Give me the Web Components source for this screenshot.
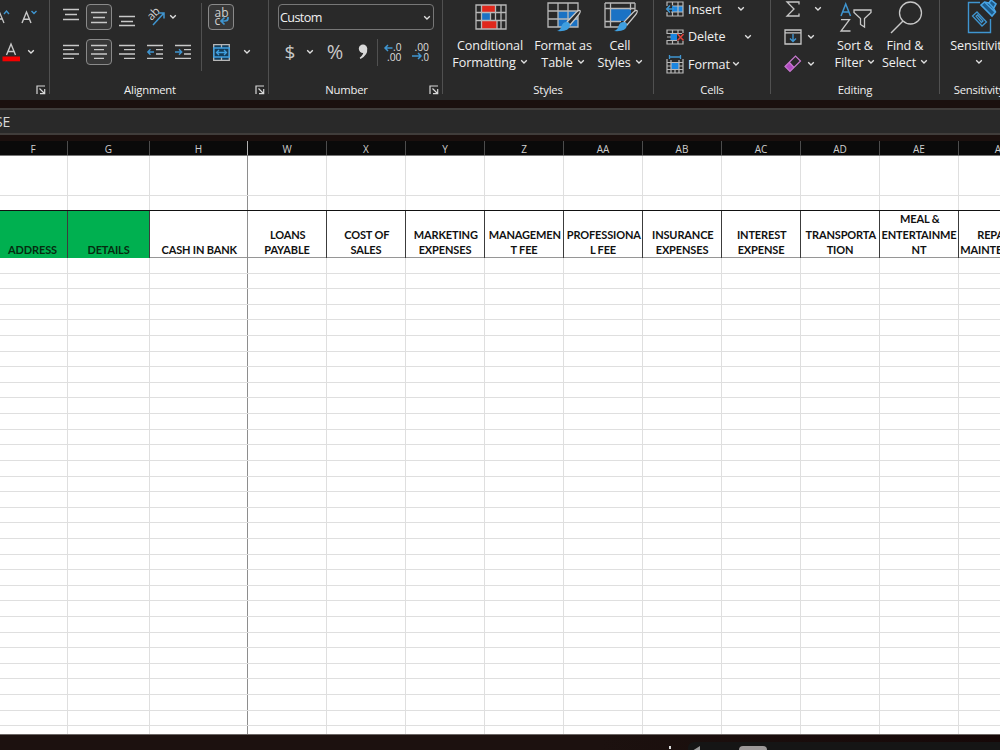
<!DOCTYPE html>
<html lang="en">
<head>
<meta charset="utf-8">
<title>Workbook</title>
<style>
	body {
		margin: 0;
		width: 1000px;
		height: 750px;
		overflow: hidden;
		background: #1b100e;
		color: #f0f0f0;
		font-family: "Open Sans", "Noto Sans", sans-serif;
	}
</style>
</head>
<body>
<excel-window></excel-window>

<script>
// Each icon is [width, height, markup]
const ICONS = {
	chevron: [8, 6, '<path d="M1.200 1.200 4 4 6.800 1.200" fill="none" stroke="#e0e0e0" stroke-width="1.300"/>'],
	launcher: [10, 10, '<path d="M1 9V1H9M3.5 3.5 8 8M8.7 4V8.7H4" fill="none" stroke="#d8d8d8" stroke-width="1.2"/>'],
	growFont: [16, 16, '<path d="M-2 14 3 2 8 14M0 10H6" fill="none" stroke="#c8c8c8" stroke-width="1.3"/><path d="M8 5 10.5 2 13 5" fill="none" stroke="#3f95d0" stroke-width="1.4"/>'],
	shrinkFont: [16, 16, '<path d="M1 14 5.5 3 10 14M2.7 10.3H8.3" fill="none" stroke="#c8c8c8" stroke-width="1.4"/><path d="M10.5 2 13 4.5 15.500 2" fill="none" stroke="#3f95d0" stroke-width="1.4"/>'],
	fontColor: [18, 18, '<path d="M4.500 12 9 1 13.500 12M6 8.500H12" fill="none" stroke="#c8c8c8" stroke-width="1.4"/><path d="M0.500 13.500H18V18.300H0.500Z" fill="#f40000"/>'],
	alignTop: [16, 18, '<path d="M0 1.500H16M2 6.500H14M0 11.500H16" stroke="#c8c8c8" stroke-width="1.300"/>'],
	alignMiddle: [16, 18, '<path d="M0 4.500H16M2 9.500H14M0 14.500H16" stroke="#c8c8c8" stroke-width="1.300"/>'],
	alignBottom: [16, 18, '<path d="M0 8.500H16M2 13.500H14M0 17.500H16" stroke="#c8c8c8" stroke-width="1.300"/>'],
	alignLeft: [16, 16, '<path d="M0 1.500H16M0 5.700H11M0 10H16M0 14.400H11" stroke="#c8c8c8" stroke-width="1.300"/>'],
	alignCenter: [16, 16, '<path d="M0 1.500H16M3 5.700H13M0 10H16M3 14.400H13" stroke="#c8c8c8" stroke-width="1.300"/>'],
	alignRight: [16, 16, '<path d="M0 1.500H16M5 5.700H16M0 10H16M5 14.400H16" stroke="#c8c8c8" stroke-width="1.300"/>'],
	outdent: [16, 16, '<path d="M0 1.500H16M9 5.700H16M9 10H16M0 14.400H16" stroke="#c8c8c8" stroke-width="1.300"/><path d="M7 8H1M3.500 5.300 0.800 8 3.500 10.700" fill="none" stroke="#3f95d0" stroke-width="1.400"/>'],
	indent: [16, 16, '<path d="M0 1.500H16M9 5.700H16M9 10H16M0 14.400H16" stroke="#c8c8c8" stroke-width="1.300"/><path d="M0 8H6.500M4 5.300 6.700 8 4 10.700" fill="none" stroke="#3f95d0" stroke-width="1.400"/>'],
	orient: [18, 18, '<text x="5.500" y="13" transform="rotate(-45 5.500 13)" font-size="11.500" letter-spacing="-0.500" fill="#d0d0d0">ab</text><path d="M7 17 17.500 5.500M12.500 5H18V10.500" fill="none" stroke="#3f95d0" stroke-width="1.500"/>'],
	wrap: [18, 18, '<text x="2.500" y="8.500" font-size="12" fill="#d0d0d0">ab</text><text x="2.500" y="16.500" font-size="12" fill="#d0d0d0">c</text><path d="M16 9V10Q16 13 13 13H9.500M12.500 9.500 9 13 12.500 16.500" fill="none" stroke="#3f95d0" stroke-width="1.700"/>'],
	merge: [17, 17, '<path d="M1 1H16V16H1Z" fill="#153c58"/><path d="M0.700 0.700H16.300V16.300H0.700ZM8.500 1V4M8.500 13V16" fill="none" stroke="#b8b8b8" stroke-width="1.300"/><path d="M0.700 4H16.300V13H0.700ZM3.500 8.500H13.500M6 6 3.500 8.500 6 11M11 6 13.500 8.500 11 11" fill="none" stroke="#3f9fe0" stroke-width="1.300"/>'],
	comma: [10, 16, '<circle cx="5" cy="4.800" r="4.200" fill="#d8d8d8"/><path d="M5.500 4.500H9.200Q10 11 2.500 15L1.700 13.800Q6.500 10 5.500 4.500" fill="#d8d8d8"/>'],
	moreDecimals: [18, 18, '<text x="9" y="8" font-size="11" textLength="8.500" lengthAdjust="spacingAndGlyphs" fill="#dcdcdc">.0</text><text x="3" y="17.500" font-size="11" textLength="14.500" lengthAdjust="spacingAndGlyphs" fill="#dcdcdc">.00</text><path d="M8.500 5H1M4 2 1 5 4 8" fill="none" stroke="#3f95d0" stroke-width="1.500"/>'],
	lessDecimals: [18, 18, '<text x="2.500" y="8" font-size="11" textLength="14.500" lengthAdjust="spacingAndGlyphs" fill="#dcdcdc">.00</text><text x="9" y="17.500" font-size="11" textLength="8" lengthAdjust="spacingAndGlyphs" fill="#dcdcdc">.0</text><path d="M0 13H9M6 10 9 13 6 16" fill="none" stroke="#3f95d0" stroke-width="1.500"/>'],
	conditional: [32, 26, '<path d="M6 1H20V8H6ZM6 17H22V25H6Z" fill="#e0281c"/><path d="M6 9H15V16H6Z" fill="#1b72c4"/><path d="M1 1H31V25H1ZM6.500 1V25M20.500 1V16M22 17V25M26 1V25M15.500 8.500V16.500M1 8.500H31M1 16.500H31" fill="none" stroke="#b8b8b8" stroke-width="1.300"/>'],
	formatTable: [34, 30, '<path d="M11 9H31V25H11Z" fill="#1b72c4"/><path d="M1 1H31V25H1ZM11 1V25M21 1V25M1 9H31M1 17H31" fill="none" stroke="#b8b8b8" stroke-width="1.300"/><use href="#brush"/>'],
	cellStyles: [34, 30, '<path d="M6 7H27V19H6Z" fill="#1b72c4"/><path d="M1 1H31M1 1V25H16M31 1V9M6.500 1V25M26.500 1V8M1 6.500H31M1 19.500H17" fill="none" stroke="#b8b8b8" stroke-width="1.300"/><use href="#brush"/>'],
	insert: [18, 16, '<path d="M6 5H17V11H6Z" fill="#1b86e0"/><path d="M1 5V1H17V15H1V11M6.500 1V4.500M12 1V15M6.500 11V15M7 5H17M5 11H17" fill="none" stroke="#b8b8b8" stroke-width="1.200"/><path d="M8 8H1M4 4.500 0.800 8 4 11.500" fill="none" stroke="#3f95d0" stroke-width="1.600"/>'],
	remove: [18, 16, '<path d="M4.500 5H11V11H4.500Z" fill="#1b86e0"/><path d="M1 5V1H17V4M1 4.500H16M1 11.500H11M1 11V15H17V12M6.500 1V5M12 1V4M6.500 11V15M12 12V15M1 8H5" fill="none" stroke="#b8b8b8" stroke-width="1.200"/><path d="M11.500 5 17.500 11.500M17.500 5 11.500 11.500" stroke="#e0443c" stroke-width="1.500"/>'],
	format: [18, 19, '<path d="M5 8H13V14H5Z" fill="#1b86e0"/><path d="M1 4V18H17V4M1 7.500H17M1 14.500H17M5 5V18M13 5V18M1 11H5M13 11H17M9 14V18" fill="none" stroke="#b8b8b8" stroke-width="1.200"/><path d="M3.500 2H14.500M3.500 0V4M14.500 0V4" stroke="#3f95d0" stroke-width="1.300"/>'],
	sum: [14, 16, '<path d="M13 3.500V1H1L8 8 1 15H13V12.500" fill="none" stroke="#c8c8c8" stroke-width="1.300"/>'],
	fill: [18, 16, '<path d="M1 1H17V15H1ZM1 3.800H17" fill="none" stroke="#c8c8c8" stroke-width="1.300"/><path d="M9 5V12.500M6 9.500 9 12.500 12 9.500" fill="none" stroke="#3f95d0" stroke-width="1.400"/>'],
	eraser: [18, 18, '<path d="M5.500 7.500 10 12.500 6 16.500 1 11.500Z" fill="#b04ac0"/><path d="M1 11.500 11.500 1 16.500 6 6 16.500ZM5.500 7.500 10 12.500" fill="none" stroke="#c878d0" stroke-width="1.200"/>'],
	sort: [32, 31, '<path d="M1 14 5.700 2 10.500 14M2.500 10H9" fill="none" stroke="#3f95d0" stroke-width="1.500"/><path d="M1 17.700H9.500L1 29H10.500" fill="none" stroke="#c8c8c8" stroke-width="1.300"/><path d="M14 8H31V10.500L24.500 16.500V25L20.500 22.500V16.500L14 10.500Z" fill="none" stroke="#c8c8c8" stroke-width="1.300"/>'],
	find: [32, 33, '<circle cx="20.500" cy="12" r="11" fill="none" stroke="#c8c8c8" stroke-width="1.300"/><path d="M13 20 1 32" stroke="#c8c8c8" stroke-width="1.400"/>'],
	sensitivity: [26, 33, '<path d="M13 1.500H1.500V31.500H23.500V18" fill="none" stroke="#3f95d0" stroke-width="1.400"/><path d="M5.500 15 10 11 19.500 21 15 25ZM9 15.200 10.500 14 16 20 14.500 21.500Z" fill="none" stroke="#3f95d0" stroke-width="1.300"/><path d="M14 4 17.500 1 22 2 24 -1 29 3 26.500 7.500 28.500 11 25 15Z" fill="#1d5c8c" stroke="#48a4e4" stroke-width="1.600"/><path d="M17.500 1 28 11M22 2 26.500 7" fill="none" stroke="#48a4e4" stroke-width="1.400"/>']
};

const BRUSH = `<g>
	<path d="M33 8.500Q34 10 31 13.500L23 23 20 20 29 10.500Q31.500 8 33 8.500Z" fill="#292929" stroke="#c8c8c8" stroke-width="1.200"/>
	<path d="M19.500 20Q23 20 23 23.500Q22 30 10 29Q14 27.500 14.500 24Q16 20 19.500 20Z" fill="#3f9fe0"/>
</g>`;

class UiIcon extends HTMLElement {
	constructor() {
		super();
		this.attachShadow({ mode: 'open' });
	}

	connectedCallback() {
		const [w, h, markup] = ICONS[this.getAttribute('name')];
		this.shadowRoot.innerHTML = `<style>
			:host { display: inline-block; flex: none; width: ${w}px; height: ${h}px; }
			svg { display: block; overflow: visible; }
		</style>
		<svg width="${w}" height="${h}" viewBox="0 0 ${w} ${h}" aria-hidden="true">${markup.replace('<use href="#brush"/>', BRUSH)}</svg>`;
	}
}
customElements.define('ui-icon', UiIcon);

// Small square button, optionally pressed
class ToolButton extends HTMLElement {
	constructor() {
		super();
		this.attachShadow({ mode: 'open' }).innerHTML = `<style>
			:host {
				align-items: center;
				border: 1px solid transparent;
				border-radius: 4px;
				box-sizing: border-box;
				color: #c8c8c8;
				display: flex;
				flex: none;
				font-size: 19px;
				height: 26px;
				justify-content: center;
				line-height: 26px;
				margin: 0 1px;
				width: 26px;
			}
			:host([pressed]) {
				background: #373737;
				border-color: #8a8a8a;
			}
		</style><slot></slot>`;
	}
}
customElements.define('tool-button', ToolButton);

// Large button: icon on top, two lines of text, the arrow ends the second
class BigButton extends HTMLElement {
	constructor() {
		super();
		this.attachShadow({ mode: 'open' });
	}

	connectedCallback() {
		this.shadowRoot.innerHTML = `<style>
			:host {
				align-items: center;
				display: flex;
				flex: none;
				flex-direction: column;
				font-size: 12.6px;
				letter-spacing: -0.12px;
				line-height: 17px;
				white-space: nowrap;
			}
			.icon { display: flex; height: 34px; align-items: center; justify-content: center; margin-bottom: 2.5px; padding-left: 2px; }
			.second { align-items: center; display: flex; gap: 4px; height: 17px; }
			.second ui-icon { margin-top: -1px; }
		</style>
		<div class="icon"><ui-icon name="${this.getAttribute('icon')}"></ui-icon></div>
		<div>${this.getAttribute('top')}</div>
		<div class="second"><slot></slot><ui-icon name="chevron"></ui-icon></div>`;
	}
}
customElements.define('big-button', BigButton);

// One group of the ribbon with its caption and an optional launcher
class RibbonGroup extends HTMLElement {
	constructor() {
		super();
		this.attachShadow({ mode: 'open' });
	}

	connectedCallback() {
		const launcher = this.hasAttribute('launcher') ? '<ui-icon name="launcher"></ui-icon>' : '';
		this.shadowRoot.innerHTML = `<style>
			:host {
				box-sizing: border-box;
				display: flex;
				flex: none;
				flex-direction: column;
				height: 94px;
				border-right: 1px solid #505050;
			}
			:host(:last-of-type) { border-right: 0; }
			.body { display: flex; flex: none; height: 80px; }
			.caption { align-items: center; display: flex; flex: none; font-size: 11.3px; height: 19px; line-height: 19px; }
			:host([launcher]) .caption { padding-right: 3px; }
			.caption span { flex: 1; text-align: center; letter-spacing: -0.2px; }
			:host([launcher]) .caption span { margin-right: 5px; }
		</style>
		<div class="body"><slot></slot></div>
		<div class="caption"><span>${this.getAttribute('caption') || ''}</span>${launcher}</div>`;
	}
}
customElements.define('ribbon-group', RibbonGroup);

class ExcelRibbon extends HTMLElement {
	constructor() {
		super();
		this.attachShadow({ mode: 'open' }).innerHTML = `<style>
			:host { background: #292929; display: flex; height: 100px; overflow: hidden; width: 1070px; }
			.col { display: flex; flex-direction: column; }
			.row { align-items: center; display: flex; flex: none; height: 26px; }
			.two { gap: 9px; padding-top: 4px; }
			.rule { background: #505050; flex: none; width: 1px; }
			.font { width: 50px; }
			.align { width: 219px; }
			.align .two:first-child { padding-left: 7px; width: 145px; }
			.number { width: 174px; }
			.number .two { padding-left: 9px; }
			.select {
				align-items: center;
				border: 1px solid #777;
				border-radius: 4px;
				box-sizing: border-box;
				display: flex;
				font-size: 12.6px;
				height: 26px;
				justify-content: space-between;
				letter-spacing: -0.6px;
				padding: 1px 2px 0 1px;
				width: 156px;
			}
			.styles { width: 211px; }
			.cells { width: 117px; }
			.cells .col, .small { gap: 1.5px; }
			.cells .col { margin-top: -4px; padding-left: 12px; }
			.cells .row { font-size: 12.6px; letter-spacing: -0.1px; }
			.cells .row ui-icon:first-child { margin-right: 4px; }
			.editing { width: 169px; }
			.small { margin-top: -4px; padding-left: 12px; width: 47px; }
			.small .box { display: flex; justify-content: center; width: 19px; margin-right: 5px; }
			.sensitivity { width: 78px; }
		</style>
		<ribbon-group class="font" launcher>
			<div class="col two">
				<div class="row"><ui-icon name="growFont" style="margin-left:-4px"></ui-icon><ui-icon name="shrinkFont" style="margin-left:9px"></ui-icon></div>
				<div class="row"><ui-icon name="fontColor" style="margin-left:2px"></ui-icon><ui-icon name="chevron" style="margin-left:7px"></ui-icon></div>
			</div>
		</ribbon-group>
		<ribbon-group class="align" caption="Alignment" launcher>
			<div class="col two">
				<div class="row">
					<tool-button><ui-icon name="alignTop"></ui-icon></tool-button>
					<tool-button pressed><ui-icon name="alignMiddle"></ui-icon></tool-button>
					<tool-button><ui-icon name="alignBottom"></ui-icon></tool-button>
					<tool-button><ui-icon name="orient"></ui-icon></tool-button>
					<ui-icon name="chevron"></ui-icon>
				</div>
				<div class="row">
					<tool-button><ui-icon name="alignLeft"></ui-icon></tool-button>
					<tool-button pressed><ui-icon name="alignCenter"></ui-icon></tool-button>
					<tool-button><ui-icon name="alignRight"></ui-icon></tool-button>
					<tool-button><ui-icon name="outdent"></ui-icon></tool-button>
					<tool-button><ui-icon name="indent"></ui-icon></tool-button>
				</div>
			</div>
			<div class="rule" style="height:68px;margin:3px 5px 0 -1px"></div>
			<div class="col two">
				<div class="row"><tool-button pressed><ui-icon name="wrap"></ui-icon></tool-button></div>
				<div class="row"><tool-button><ui-icon name="merge"></ui-icon></tool-button><ui-icon name="chevron" style="margin-left:8px"></ui-icon></div>
			</div>
		</ribbon-group>
		<ribbon-group class="number" caption="Number" launcher>
			<div class="col two">
				<div class="row"><div class="select"><span>Custom</span><ui-icon name="chevron"></ui-icon></div></div>
				<div class="row">
					<tool-button style="margin-left:-1px">$</tool-button>
					<ui-icon name="chevron" style="margin:0 7px 0 2px"></ui-icon>
					<tool-button style="font-size:20px">%</tool-button>
					<tool-button><ui-icon name="comma"></ui-icon></tool-button>
					<div class="rule" style="height:27px;margin-right:1px"></div>
					<tool-button><ui-icon name="moreDecimals"></ui-icon></tool-button>
					<tool-button><ui-icon name="lessDecimals"></ui-icon></tool-button>
				</div>
			</div>
		</ribbon-group>
		<ribbon-group class="styles" caption="Styles">
			<big-button icon="conditional" top="Conditional" style="width:82px;margin-left:6px">Formatting</big-button>
			<big-button icon="formatTable" top="Format as" style="width:64px">Table</big-button>
			<big-button icon="cellStyles" top="Cell" style="width:50px">Styles</big-button>
		</ribbon-group>
		<ribbon-group class="cells" caption="Cells">
			<div class="col">
				<div class="row"><ui-icon name="insert"></ui-icon><span style="width:49px">Insert</span><ui-icon name="chevron"></ui-icon></div>
				<div class="row"><ui-icon name="remove"></ui-icon><span style="width:56px">Delete</span><ui-icon name="chevron"></ui-icon></div>
				<div class="row"><ui-icon name="format"></ui-icon><span style="width:44px">Format</span><ui-icon name="chevron"></ui-icon></div>
			</div>
		</ribbon-group>
		<ribbon-group class="editing" caption="Editing">
			<div class="col small">
				<div class="row"><div class="box"><ui-icon name="sum"></ui-icon></div><ui-icon name="chevron" style="margin-left:7px"></ui-icon></div>
				<div class="row"><div class="box"><ui-icon name="fill"></ui-icon></div><ui-icon name="chevron"></ui-icon></div>
				<div class="row"><div class="box"><ui-icon name="eraser"></ui-icon></div><ui-icon name="chevron"></ui-icon></div>
			</div>
			<big-button icon="sort" top="Sort &amp;amp;" style="width:50px">Filter</big-button>
			<big-button icon="find" top="Find &amp;amp;" style="width:50px">Select</big-button>
		</ribbon-group>
		<ribbon-group class="sensitivity" caption="Sensitivity">
			<big-button icon="sensitivity" top="Sensitivity" style="width:78px"></big-button>
		</ribbon-group>`;
	}
}
customElements.define('excel-ribbon', ExcelRibbon);

class FormulaBar extends HTMLElement {
	constructor() {
		super();
		this.attachShadow({ mode: 'open' }).innerHTML = `<style>
			:host {
				background: #292929;
				border: solid #403d3b;
				border-width: 2px 0;
				box-sizing: border-box;
				display: flex;
				font-size: 14px;
				height: 27px;
				line-height: 23px;
				margin: 8px 0 6px;
				overflow: hidden;
			}
			span { margin-left: -5px; color: #d8d8d8; letter-spacing: -0.3px; }
		</style><span><slot></slot></span>`;
	}
}
customElements.define('formula-bar', FormulaBar);

// Visible columns: letter, width, heading text, fill
const COLUMNS = [
	['F', 68, 'ADDRESS', 'green'],
	['G', 82, 'DETAILS', 'green'],
	['H', 98, 'CASH IN BANK', 'frozen'],
	['W', 79, 'LOANS\nPAYABLE'],
	['X', 79, 'COST OF\nSALES'],
	['Y', 79, 'MARKETING\nEXPENSES'],
	['Z', 79, 'MANAGEMEN\nT FEE'],
	['AA', 79, 'PROFESSIONA\nL FEE'],
	['AB', 79, 'INSURANCE\nEXPENSES'],
	['AC', 79, 'INTEREST\nEXPENSE'],
	['AD', 79, 'TRANSPORTA\nTION'],
	['AE', 79, 'MEAL &amp;\nENTERTAINME\nNT'],
	['AF', 83, 'REPAIR &amp;\nMAINTENANCE']
];

class SheetGrid extends HTMLElement {
	constructor() {
		super();
		this.attachShadow({ mode: 'open' });
	}

	connectedCallback() {
		const row = (cls, content) => `<div class="row ${cls}">${COLUMNS.map(c =>
			`<div class="cell ${c[3] || ''}">${content(c)}</div>`).join('')}</div>`;

		let rows = row('letters', c => c[0]);
		rows += row('tall', () => '');
		rows += row('short', () => '');
		rows += row('titles', c => `<span>${c[2]}</span>`);
		for (let i = 0; i < 31; i++) {
			rows += row('', () => '');
		}

		this.shadowRoot.innerHTML = `<style>
			:host { background: #fff; display: block; height: 593px; overflow: hidden; border-bottom: 1px solid #6c6664; }
			.row {
				box-sizing: border-box;
				display: grid;
				grid-template-columns: ${COLUMNS.map(c => c[1] + 'px').join(' ')};
				height: 15.62px;
				border-bottom: 1px solid #dfdfdf;
				width: max-content;
			}
			.cell { border-right: 1px solid #dfdfdf; }
			.cell.frozen { border-right-color: #8e8e8e; }
			.letters { background: #0a0a0a; border-bottom-color: #777; color: #d0d0d0; font-size: 10px; height: 15px; line-height: 17px; text-align: center; }
			.letters .cell { border-right-color: #4c4c4c; height: 14px; }
			.letters .cell.frozen { border-right-color: #b0b0b0; }
			.letters .cell:first-child { text-indent: -1px; }
			.letters .cell:last-child { text-indent: 1px; }
			.tall { height: 40px; }
			.short { height: 15px; border-bottom-color: #111; }
			.titles { height: 47px; border-bottom-color: #969696; }
			.titles .cell {
				align-items: flex-end;
				border-right-color: #3c3c3c;
				color: #111;
				display: flex;
				font: bold 11px/15.6px Lato, "Open Sans", sans-serif;
				justify-content: center;
				letter-spacing: -0.14px;
				text-align: center;
				text-indent: 1.5px;
				white-space: pre;
				word-spacing: -0.1px;
			}
			.titles .green { background: #00b050; color: #062c10; text-indent: -2px; }
			.titles .green + .green { text-indent: 0; }
			.titles .cell.frozen { border-right-color: #8e8e8e; }
		</style>${rows}`;
	}
}
customElements.define('sheet-grid', SheetGrid);

// Top edge of the sheet tabs and the horizontal scroll bar
class ScrollStrip extends HTMLElement {
	constructor() {
		super();
		this.attachShadow({ mode: 'open' }).innerHTML = `<style>
			:host { background: linear-gradient(90deg, #1c110f 0 60%, #160808); display: flex; height: 15px; overflow: hidden; }
			.dot { background: #ddd; height: 3px; margin: 11px 0 0 669px; width: 2px; }
			.track { background: #151515; border-radius: 6px 0 0 0; display: flex; flex: 1; height: 20px; margin: 7px 0 0 17px; }
			.arrow { border: solid transparent; border-right-color: #999; border-width: 5px 8px 5px 0; height: 0; margin: 4px 0 0 4px; }
			.thumb { background: #9c9898; border-radius: 4px; height: 12px; margin: 4px 0 0 39px; width: 28px; }
		</style>
		<div class="dot"></div>
		<div class="track"><div class="arrow"></div><div class="thumb"></div></div>`;
	}
}
customElements.define('scroll-strip', ScrollStrip);

class ExcelWindow extends HTMLElement {
	constructor() {
		super();
		this.attachShadow({ mode: 'open' }).innerHTML = `<style>
			:host { display: flex; flex-direction: column; height: 750px; overflow: hidden; width: 1000px; }
			excel-ribbon, sheet-grid, scroll-strip, formula-bar { flex: none; }
		</style>
		<excel-ribbon></excel-ribbon>
		<formula-bar>SE</formula-bar>
		<sheet-grid></sheet-grid>
		<scroll-strip></scroll-strip>`;
	}
}
customElements.define('excel-window', ExcelWindow);
</script>
</body>
</html>
